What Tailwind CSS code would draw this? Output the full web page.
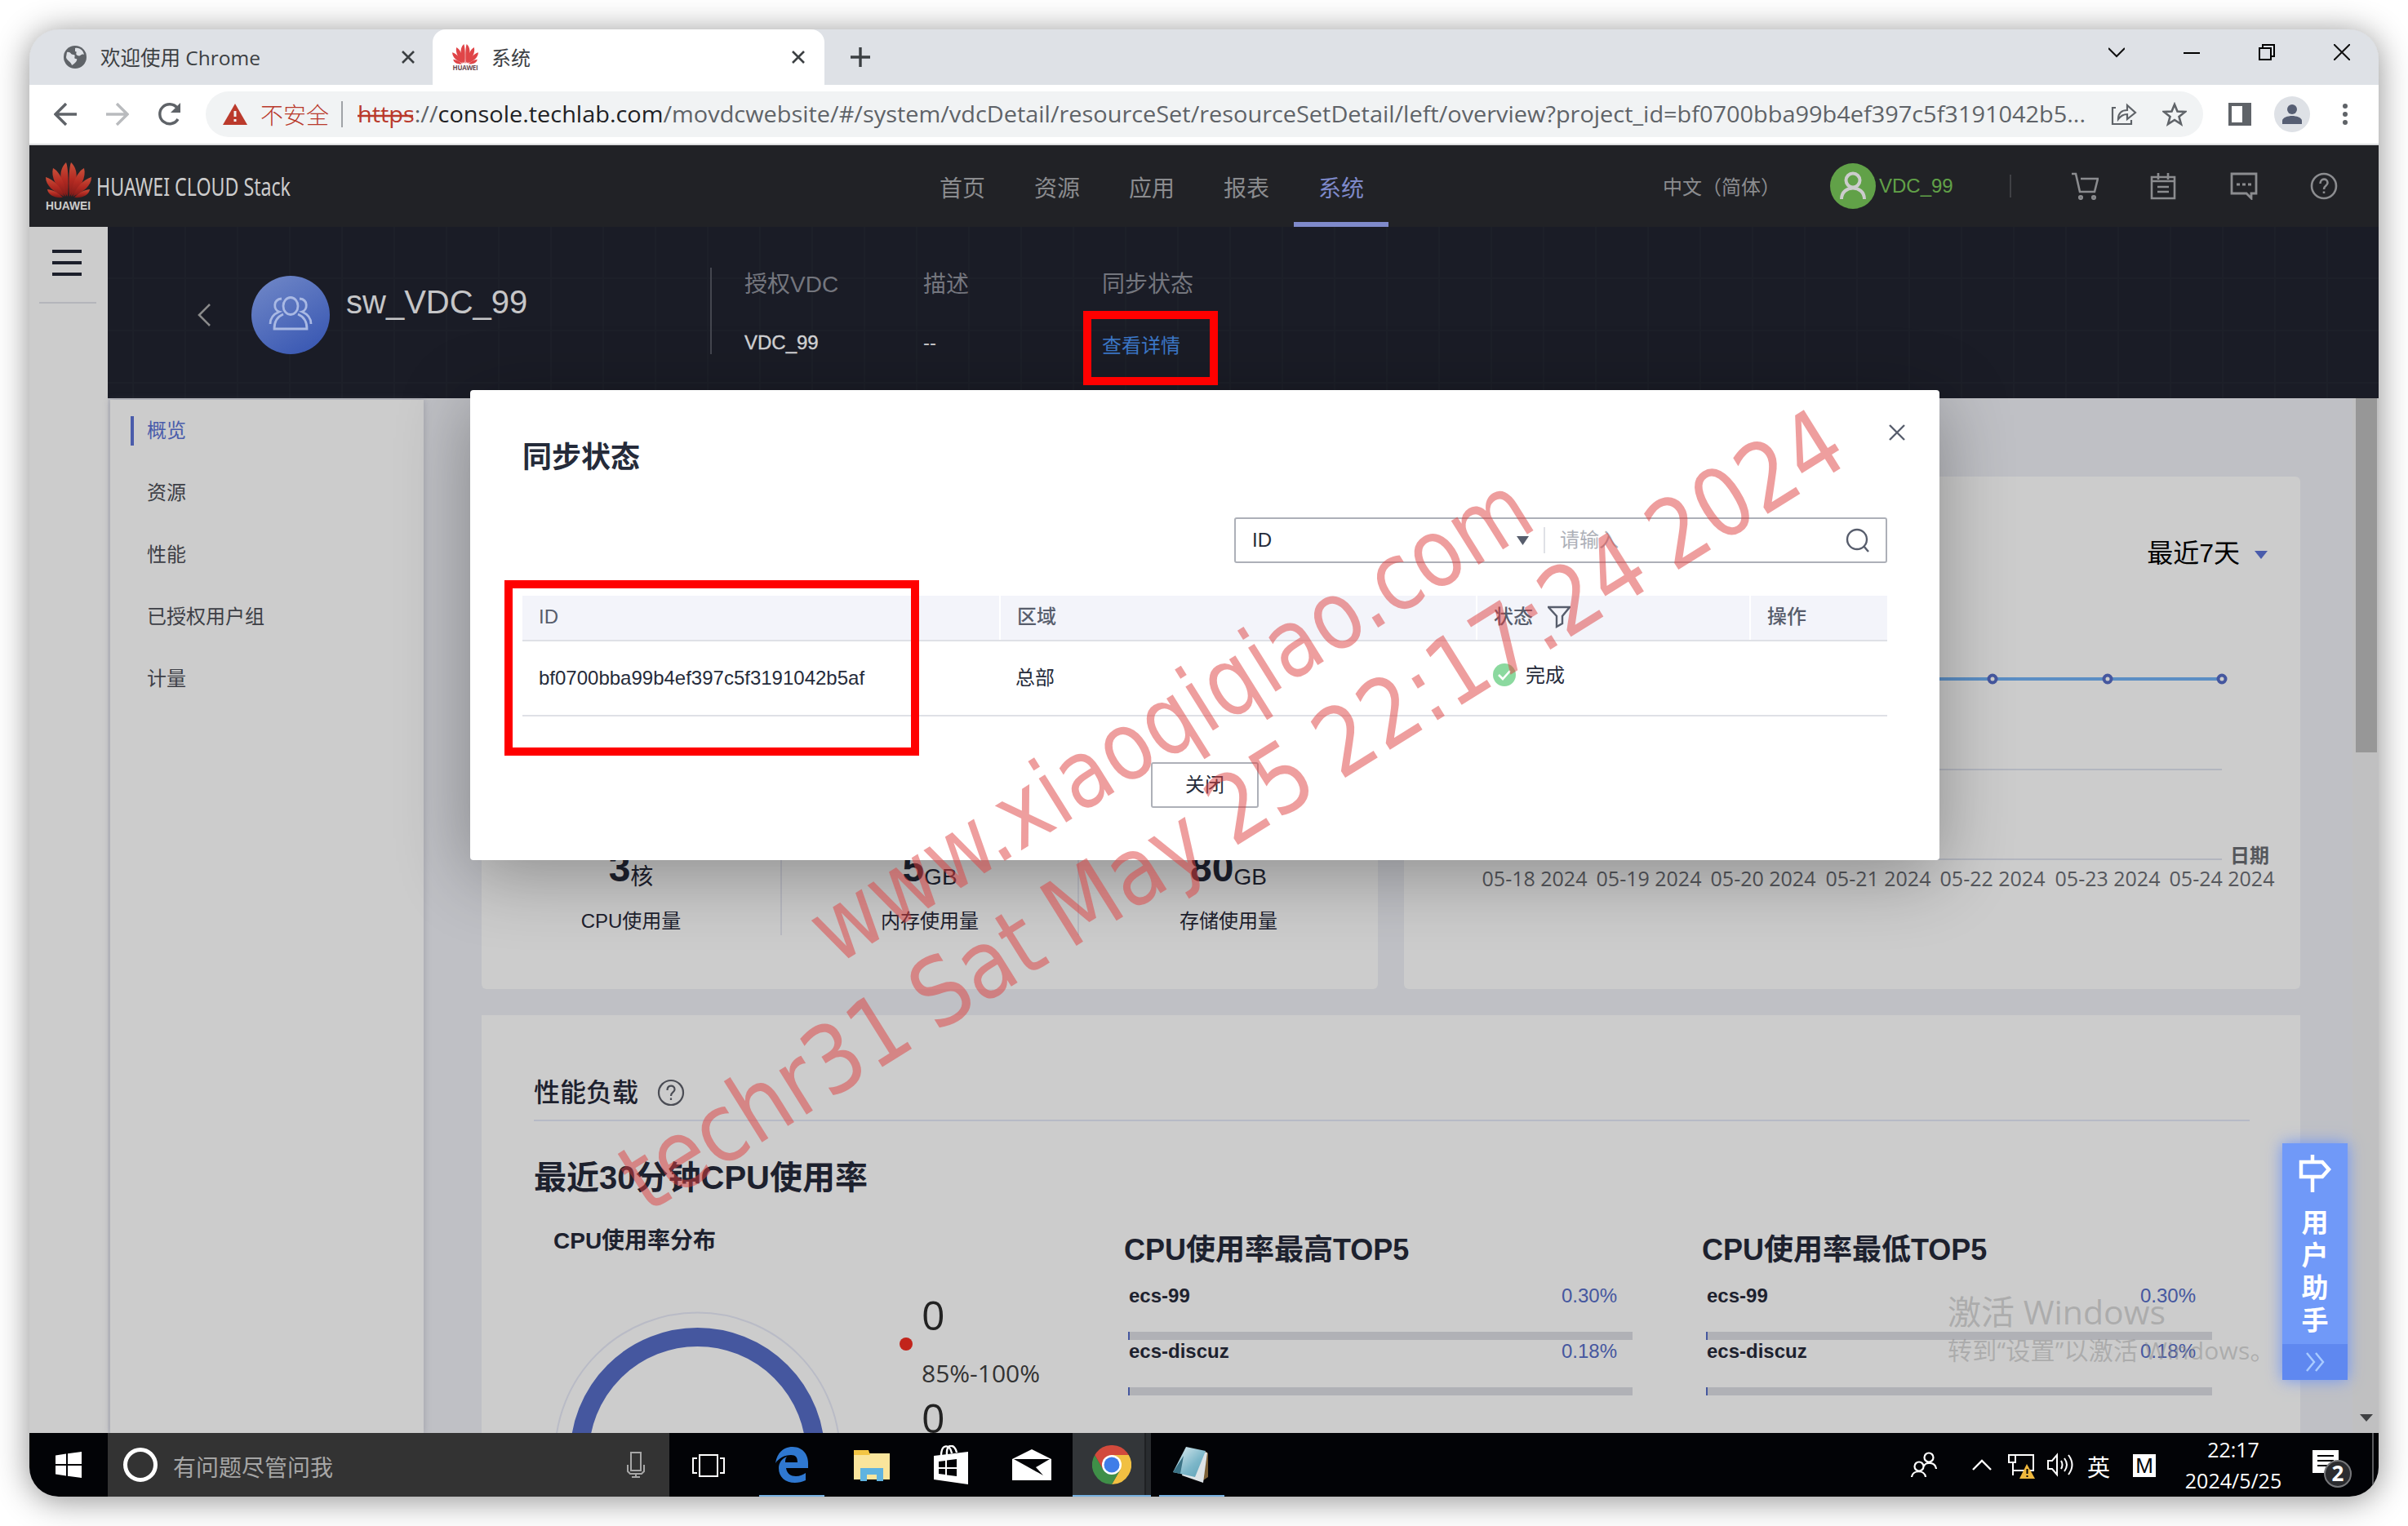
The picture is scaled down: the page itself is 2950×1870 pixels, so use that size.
<!DOCTYPE html>
<html lang="zh-CN">
<head>
<meta charset="utf-8">
<title>系统</title>
<script src="https://cdn.jsdelivr.net/npm/@tailwindcss/browser@4"></script>
</head>
<body class="w-[2950px] h-[1870px] overflow-hidden bg-white font-['Liberation_Sans','Noto_Sans_CJK_SC',sans-serif] text-[24px] leading-[28px]">
<svg class="hidden">
  <symbol id="flower" viewBox="0 0 56 44">
    <path d="M27 42C18 29 14 10 25 0C28 8 28 30 27 42Z"/>
    <path d="M25 42C13 31 6 18 9 7C17 11 24 26 25 42Z"/>
    <path d="M23 42C10 36 0 29 0 18C10 21 19 31 23 42Z"/>
    <path d="M21 43C11 44 3 40 2 33C10 34 17 38 21 43Z"/>
    <path d="M29 42C38 29 42 10 31 0C28 8 28 30 29 42Z"/>
    <path d="M31 42C43 31 50 18 47 7C39 11 32 26 31 42Z"/>
    <path d="M33 42C46 36 56 29 56 18C46 21 37 31 33 42Z"/>
    <path d="M35 43C45 44 53 40 54 33C46 34 39 38 35 43Z"/>
  </symbol>
</svg>

<div class="relative m-[36px] w-[2878px] h-[1798px] rounded-[36px] shadow-[0_4px_40px_rgba(0,0,0,0.45)]">
<div class="relative flex flex-col w-full h-full rounded-[36px] overflow-hidden bg-[#ccc]">

  <!-- tab strip -->
  <div class="flex h-[68px] shrink-0 bg-[#dee1e6] font-['Open_Sans','Noto_Sans_CJK_SC',sans-serif] text-[#3c4043]">
    <div class="flex items-center w-[494px] h-full pl-[42px] pr-[22px]">
      <svg class="w-[28px] h-[28px]" viewBox="0 0 28 28"><circle cx="14" cy="14" r="14" fill="#5f6368"/><path d="M4 8C9 7 8 11 12 11S11 16 15 16S13 23 10 24C9 19 3 18 3 14ZM14 3C20 2 24 6 25 11C21 9 21 14 17 12S18 7 14 7Z" fill="#dee1e6"/></svg>
      <span class="ml-[17px] pt-[2px] grow text-[24.5px]">欢迎使用 Chrome</span>
      <svg class="w-[16px] h-[16px]" viewBox="0 0 16 16"><path d="M1 1L15 15M15 1L1 15" stroke="#3c4043" stroke-width="2.6"/></svg>
    </div>
    <div class="flex items-center w-[480px] h-full pl-[24px] pr-[24px] bg-white rounded-t-[16px]">
      <span class="flex flex-col items-center w-[32px]">
        <svg class="w-[32px] h-[25px]" fill="#e04548"><use href="#flower"/></svg>
        <span class="text-[8px] leading-[8px] font-bold text-[#6b4a50] tracking-[-0.3px]">HUAWEI</span>
      </span>
      <span class="ml-[16px] pt-[2px] grow">系统</span>
      <svg class="w-[16px] h-[16px]" viewBox="0 0 16 16"><path d="M1 1L15 15M15 1L1 15" stroke="#3c4043" stroke-width="2.6"/></svg>
    </div>
    <div class="flex items-center pl-[32px] grow">
      <svg class="w-[24px] h-[24px]" viewBox="0 0 24 24"><path d="M12 0V24M0 12H24" stroke="#3c4043" stroke-width="3.4"/></svg>
    </div>
    <div class="flex items-center gap-[72px] pr-[35px] pb-[12px]">
      <svg class="w-[20px] h-[20px]" viewBox="0 0 20 20"><path d="M0 5L10 15L20 5" fill="none" stroke="#111" stroke-width="2"/></svg>
      <svg class="w-[20px] h-[20px]" viewBox="0 0 20 20"><path d="M0 11H20" stroke="#000" stroke-width="2"/></svg>
      <svg class="w-[20px] h-[20px]" viewBox="0 0 20 20"><path d="M1 5H15V19H1ZM5 5V1H19V15H15" fill="none" stroke="#000" stroke-width="2"/></svg>
      <svg class="w-[20px] h-[20px]" viewBox="0 0 20 20"><path d="M0 0L20 20M20 0L0 20" stroke="#111" stroke-width="2"/></svg>
    </div>
  </div>

  <!-- address bar -->
  <div class="flex items-center h-[74px] shrink-0 bg-white border-b-2 border-[#dcdddf]">
    <svg class="ml-[30px] w-[28px] h-[28px]" viewBox="0 0 28 28"><path d="M28 14H3M15 1L2 14L15 27" fill="none" stroke="#5f6368" stroke-width="3.4"/></svg>
    <svg class="ml-[36px] w-[28px] h-[28px]" viewBox="0 0 28 28"><path d="M0 14H25M13 1L26 14L13 27" fill="none" stroke="#b9bbbe" stroke-width="3.4"/></svg>
    <svg class="ml-[35px] w-[30px] h-[30px]" viewBox="0 0 30 30"><path d="M25 21A12 12 0 1 1 24 7" fill="none" stroke="#5f6368" stroke-width="3.4"/><path d="M28 1V13H16Z" fill="#5f6368"/></svg>
    <div class="flex items-center ml-[29px] w-[2447px] h-[56px] rounded-full bg-[#f1f3f4]">
      <svg class="ml-[21px] w-[30px] h-[26px]" viewBox="0 0 30 26"><path d="M15 0L30 26H0Z" fill="#bb3a2c"/><path d="M13.5 9H16.5V16H13.5ZM13.5 19H16.5V22H13.5Z" fill="#f1f3f4"/></svg>
      <span class="ml-[16px] w-[84px] text-[28px] leading-[36px] text-[#b9392b] whitespace-nowrap font-['Noto_Sans_CJK_SC',sans-serif] font-light">不安全</span>
      <div class="ml-[15px] w-[2px] h-[32px] bg-[#a0a3a7]"></div>
      <svg class="ml-[18px] w-[2120px] h-[56px]" viewBox="0 0 2120 56" font-family="Open Sans" font-size="27.500" fill="#5f6368">
        <text x="0" y="38" textLength="2117" lengthAdjust="spacingAndGlyphs"><tspan fill="#b9392b">https</tspan>://<tspan fill="#202124">console.techlab.com</tspan>/movdcwebsite/#/system/vdcDetail/resourceSet/resourceSetDetail/left/overview?project_id=bf0700bba99b4ef397c5f3191042b5...</text>
        <path d="M0 30H68" stroke="#b9392b" stroke-width="2.5"/>
      </svg>
      <svg class="ml-[28px] w-[32px] h-[28px]" viewBox="0 0 32 28" fill="none" stroke="#5f6368" stroke-width="2.2"><path d="M6 6H2V26H25V21M9 20C9 12 14 9 20 9V3L30 12L20 20V14C15 14 12 16 9 20Z"/></svg>
      <svg class="ml-[31px] w-[30px] h-[30px]" viewBox="0 0 30 30" fill="none" stroke="#5f6368" stroke-width="2.6"><path d="M15 3L18.500 11.500L28 12L20.500 18L23 27L15 22L7 27L9.500 18L2 12L11.500 11.500Z"/></svg>
    </div>
    <svg class="ml-[31px] w-[28px] h-[28px]" viewBox="0 0 28 28"><path d="M0 0H28V28H0ZM4 4V24H17V4Z" fill="#5f6368" fill-rule="evenodd"/></svg>
    <svg class="ml-[28px] w-[44px] h-[44px]" viewBox="0 0 44 44"><circle cx="22" cy="22" r="22" fill="#dee1e6"/><circle cx="22" cy="16" r="6" fill="#565e73"/><path d="M10 34V30C10 26 17 24 22 24S34 26 34 30V34Z" fill="#565e73"/></svg>
    <svg class="ml-[39px] w-[8px] h-[28px]" viewBox="0 0 8 28" fill="#5f6368"><circle cx="4" cy="4" r="3"/><circle cx="4" cy="14" r="3"/><circle cx="4" cy="24" r="3"/></svg>
  </div>

  <!-- console header -->
  <div class="flex items-center h-[100px] shrink-0 bg-[#212226] text-[#8b8c8f]">
    <div class="flex items-center w-[1080px] pl-[20px]">
      <div class="flex flex-col items-center w-[56px] pt-[2px]">
        <svg class="w-[56px] h-[44px]"><defs><linearGradient id="red" x1="0" y1="0" x2="0" y2="1"><stop offset="0" stop-color="#c9503a"/><stop offset=".5" stop-color="#b32a22"/><stop offset="1" stop-color="#7d1a18"/></linearGradient></defs><use href="#flower" fill="url(#red)"/></svg>
        <svg class="mt-[1px] w-[58px] h-[16px]"><text x="1" y="13" font-size="15" font-weight="bold" fill="#ccc" textLength="55" lengthAdjust="spacingAndGlyphs" font-family="Liberation Sans">HUAWEI</text></svg>
      </div>
      <svg class="ml-[5px] w-[246px] h-[50px]"><text x="1" y="37" font-size="31" fill="#ccc" textLength="238" lengthAdjust="spacingAndGlyphs" font-family="Noto Sans">HUAWEI CLOUD Stack</text></svg>
    </div>
    <nav class="flex h-full w-[921px] pl-[5px] text-[28px]">
      <span class="flex items-center justify-center w-[116px] pt-[7px]">首页</span>
      <span class="flex items-center justify-center w-[116px] pt-[7px]">资源</span>
      <span class="flex items-center justify-center w-[116px] pt-[7px]">应用</span>
      <span class="flex items-center justify-center w-[116px] pt-[7px]">报表</span>
      <span class="flex items-center justify-center w-[116px] pt-[13px] border-b-[6px] border-[#7f8acb] text-[#7f8acb]">系统</span>
    </nav>
    <span class="w-[193px] whitespace-nowrap pt-[4px]">中文（简体）</span>
    <svg class="ml-[12px] w-[56px] h-[56px]" viewBox="0 0 56 56"><circle cx="28" cy="28" r="28" fill="#61a148"/><g fill="none" stroke="#ccc" stroke-width="4"><circle cx="28" cy="21" r="8.500"/><path d="M14 44C14 26 42 26 42 44"/></g></svg>
    <span class="ml-[4px] w-[160px] text-[#61a148]">VDC_99</span>
    <div class="w-[2px] h-[28px] bg-[#404145]"></div>
    <svg class="ml-[73px] w-[34px] h-[34px]" viewBox="0 0 34 34" fill="none" stroke="#8b8c8f" stroke-width="2.6"><path d="M1 2H6L11 24H29L33 8H12"/><circle cx="12" cy="31" r="1.800"/><circle cx="28" cy="31" r="1.800"/></svg>
    <svg class="ml-[62px] w-[34px] h-[34px]" viewBox="0 0 34 34" fill="none" stroke="#8b8c8f" stroke-width="2.6"><path d="M3 6H31V32H3ZM11 1V9M23 1V9M3 11H31M10 18H24M10 24H24"/></svg>
    <svg class="ml-[65px] w-[34px] h-[34px]" viewBox="0 0 34 34" fill="none" stroke="#8b8c8f" stroke-width="2.8"><path d="M2 2H32V26H26V32L20 26H2Z"/><path d="M8 15H12M15 15H19M22 15H26"/></svg>
    <svg class="ml-[64px] w-[34px] h-[34px]" viewBox="0 0 34 34" fill="none" stroke="#8b8c8f" stroke-width="2.6"><circle cx="17" cy="17" r="15"/><path d="M12.500 14C12.500 7 21.500 7 21.500 13C21.500 17 17 16 17 21M17 23.500V26"/></svg>
  </div>

  <!-- page -->
  <div class="flex h-[1478px] shrink-0">
    <aside class="w-[96px] bg-[#ccc] flex flex-col">
      <div class="flex flex-col gap-[10px] ml-[28px] mt-[28px] w-[36px]">
        <div class="h-[4px] bg-[#1c1f2b]"></div><div class="h-[4px] bg-[#1c1f2b]"></div><div class="h-[4px] bg-[#1c1f2b]"></div>
      </div>
      <div class="ml-[12px] mt-[32px] w-[70px] h-[2px] bg-[#b4b5bb]"></div>
      <div class="grow"></div>
    </aside>
    <div class="w-[2782px] flex flex-col">
      <!-- resource set banner -->
      <section class="flex h-[210px] shrink-0 bg-[#1a1c26] bg-[linear-gradient(#1d2029_2px,transparent_2px),linear-gradient(90deg,#1d2029_2px,transparent_2px)] bg-[size:64px_64px] bg-[position:30px_-2px] text-[28px] text-[#74767e]">
        <svg class="ml-[109px] mt-[94px] w-[18px] h-[28px]" viewBox="0 0 18 28"><path d="M16 1L3 14L16 27" fill="none" stroke="#8b8b8b" stroke-width="2.6"/></svg>
        <svg class="ml-[49px] mt-[60px] w-[96px] h-[96px]" viewBox="0 0 96 96">
          <defs><linearGradient id="av" x1="0" y1="0" x2=".6" y2="1"><stop offset="0" stop-color="#7289c8"/><stop offset="1" stop-color="#3d5bb4"/></linearGradient></defs>
          <circle cx="48" cy="48" r="48" fill="url(#av)"/>
          <g fill="none" stroke="#a9b9e4" stroke-width="2.800"><ellipse cx="48" cy="37" rx="9" ry="10.500"/><path d="M39 47C32 50 28 56 28 65H68C68 56 64 50 57 47M37 28C26 29 27 42 34 44C27 47 23 51 23 59M59 28C70 29 69 42 62 44C69 47 73 51 73 59"/></g>
        </svg>
        <span class="ml-[20px] mt-[68px] w-[446px] text-[40px] leading-[48px] text-[#c6c6c8]">sw_VDC_99</span>
        <div class="mt-[50px] w-[2px] h-[106px] bg-[#44464f]"></div>
        <div class="ml-[40px] mt-[53px] w-[219px]"><div class="h-[36px] leading-[36px]">授权VDC</div><div class="mt-[35px] h-[36px] leading-[36px] text-[24px] text-[#d2d2d4] [-webkit-text-stroke:0.4px]">VDC_99</div></div>
        <div class="mt-[53px] w-[219px]"><div class="h-[36px] leading-[36px]">描述</div><div class="mt-[35px] h-[36px] leading-[36px] text-[24px] text-[#c8c8ca]">--</div></div>
        <div class="mt-[53px]"><div class="h-[36px] leading-[36px]">同步状态</div><div class="mt-[39px] h-[36px] leading-[36px] text-[24px] text-[#3c78c8]">查看详情</div></div>
      </section>

      <div class="flex grow bg-[#bfc0c5]">
        <aside class="ml-[3px] mt-[2px] w-[384px] bg-[#ccc] shadow-[0_0_8px_rgba(90,90,110,0.35)] text-[#3d3f46]">
          <div class="flex items-center h-[36px] mt-[20px] ml-[25px] pl-[16px] border-l-4 border-[#4a5cab] text-[#4a5cab]">概览</div>
          <div class="flex items-center h-[36px] mt-[40px] pl-[45px]">资源</div>
          <div class="flex items-center h-[36px] mt-[40px] pl-[45px]">性能</div>
          <div class="flex items-center h-[36px] mt-[40px] pl-[45px]">已授权用户组</div>
          <div class="flex items-center h-[36px] mt-[40px] pl-[45px]">计量</div>
        </aside>

        <main class="w-[2363px] pl-[71px] pt-[96px] text-[#1d212e]">
          <div class="flex gap-[32px]">
            <section class="flex items-end w-[1098px] h-[628px] rounded-[6px] bg-[#ccc] pb-[66px]">
              <div class="w-[368px] h-[110px] border-r-2 border-[#b9bac2] flex flex-col items-center">
                <div class="h-[56px] flex items-baseline leading-[56px]"><b class="text-[48px] leading-[56px]">3</b><span class="text-[28px] leading-[28px] translate-y-1">核</span></div>
                <div class="mt-[23px] leading-[28px]">CPU使用量</div>
              </div>
              <div class="w-[364px] h-[110px] border-r-2 border-[#b9bac2] flex flex-col items-center">
                <div class="h-[56px] flex items-baseline leading-[56px]"><b class="text-[48px] leading-[56px]">5</b><span class="text-[28px] leading-[28px] translate-y-1">GB</span></div>
                <div class="mt-[23px] leading-[28px]">内存使用量</div>
              </div>
              <div class="w-[366px] h-[110px] flex flex-col items-center">
                <div class="h-[56px] flex items-baseline leading-[56px]"><b class="text-[48px] leading-[56px]">80</b><span class="text-[28px] leading-[28px] translate-y-1">GB</span></div>
                <div class="mt-[23px] leading-[28px]">存储使用量</div>
              </div>
            </section>
            <section class="w-[1098px] h-[628px] rounded-[6px] bg-[#ccc]">
              <div class="flex items-center justify-end h-[188px] pr-[40px] text-[32px] leading-[40px] text-black">最近7天
                <svg class="ml-[18px] mt-[4px] w-[16px] h-[10px]" viewBox="0 0 16 10"><path d="M0 0H16L8 10Z" fill="#4a5cab"/></svg></div>
              <svg class="w-[1098px] h-[440px]" viewBox="0 0 1098 440">
                <path d="M150 171H1002M150 281H1002" stroke="#b3b6bf" stroke-width="2"/>
                <path d="M159 60H1002" stroke="#5b8ec4" stroke-width="4"/>
                <g fill="#ccc" stroke="#45579f" stroke-width="4"><circle cx="159" cy="60" r="4.500"/><circle cx="300" cy="60" r="4.500"/><circle cx="440" cy="60" r="4.500"/><circle cx="581" cy="60" r="4.500"/><circle cx="721" cy="60" r="4.500"/><circle cx="862" cy="60" r="4.500"/><circle cx="1002" cy="60" r="4.500"/></g>
                <text x="1012" y="285" font-size="24" font-weight="700" fill="#55575c" font-family="Noto Sans CJK SC">日期</text>
                <g font-size="25" fill="#55575c" font-family="Open Sans" text-anchor="middle">
                  <text x="160" y="314">05-18 2024</text><text x="300" y="314">05-19 2024</text><text x="440" y="314">05-20 2024</text><text x="581" y="314">05-21 2024</text><text x="721" y="314">05-22 2024</text><text x="862" y="314">05-23 2024</text><text x="1002" y="314">05-24 2024</text>
                </g>
              </svg>
            </section>
          </div>

          <section class="mt-[32px] w-[2228px] h-[512px] bg-[#ccc] overflow-hidden">
            <div class="flex items-end h-[130px] ml-[64px] w-[2102px] pb-[9px] border-b-2 border-[#b6bac6]">
              <span class="text-[32px] leading-[48px] font-medium">性能负载</span>
              <svg class="ml-[23px] mb-[7px] w-[34px] h-[34px]" viewBox="0 0 34 34" fill="none" stroke="#4b4d55" stroke-width="2.200"><circle cx="17" cy="17" r="15"/><path d="M12.500 14C12.500 7 21.500 7 21.500 13C21.500 17 17 16 17 21M17 23.500V26"/></svg>
            </div>
            <div class="flex items-center h-[124px] pt-[14px] ml-[64px] text-[40px] leading-[48px] font-bold">最近30分钟CPU使用率</div>
            <div class="flex ml-[88px]">
              <div class="w-[424px]">
                <div class="h-[44px] pt-[1px] leading-[44px] text-[28px] font-bold">CPU使用率分布</div>
                <svg class="w-[370px] h-[214px]" viewBox="0 0 370 214" fill="none"><circle cx="176.500" cy="241" r="174.500" stroke="#b9bbc6" stroke-width="2"/><circle cx="176.500" cy="241" r="144.500" stroke="#45579f" stroke-width="23"/></svg>
              </div>
              <div class="flex w-[276px] pt-[80px] font-['Open_Sans',sans-serif] text-[#222]">
                <div class="mt-[61px] w-[16px] h-[16px] rounded-full bg-[#c2241b]"></div>
                <div class="ml-[11px]">
                  <div class="h-[68px] text-[50px] leading-[67px]">0</div>
                  <div class="h-[58px] text-[30px] leading-[73px] text-[#333]">85%-100%</div>
                  <div class="h-[54px] text-[50px] leading-[66px]">0</div>
                </div>
              </div>
              <div class="w-[709px] pr-[87px]">
                <div class="h-[66px] mb-[10px] text-[36px] leading-[67px] font-bold -ml-[1px]">CPU使用率最高TOP5</div>
                <div class="ml-[5px] pr-[19px] flex justify-between"><b>ecs-99</b><span class="text-[#45579f]">0.30%</span></div>
                <div class="ml-[4px] mt-[30px] h-[10px] bg-[#b0b1b6] border-l-2 border-[#45579f]"></div>
                <div class="ml-[5px] pr-[19px] flex justify-between"><b>ecs-discuz</b><span class="text-[#45579f]">0.18%</span></div>
                <div class="ml-[4px] mt-[30px] h-[10px] bg-[#b0b1b6] border-l-2 border-[#45579f]"></div>
              </div>
              <div class="w-[623px]">
                <div class="h-[66px] mb-[10px] text-[36px] leading-[67px] font-bold -ml-[2px]">CPU使用率最低TOP5</div>
                <div class="ml-[4px] pr-[20px] flex justify-between"><b>ecs-99</b><span class="text-[#45579f]">0.30%</span></div>
                <div class="ml-[3px] mt-[30px] h-[10px] bg-[#b0b1b6] border-l-2 border-[#45579f]"></div>
                <div class="ml-[4px] pr-[20px] flex justify-between"><b>ecs-discuz</b><span class="text-[#45579f]">0.18%</span></div>
                <div class="ml-[3px] mt-[30px] h-[10px] bg-[#b0b1b6] border-l-2 border-[#45579f]"></div>
              </div>
            </div>
          </section>
        </main>

        <div class="flex flex-col w-[32px] bg-[#c0c0c1]">
          <div class="ml-[4px] w-[26px] h-[434px] bg-[#979797]"></div>
          <div class="grow"></div>
          <svg class="ml-[9px] mb-[14px] w-[16px] h-[9px]" viewBox="0 0 16 9"><path d="M0 0H16L8 9Z" fill="#3f4043"/></svg>
        </div>
      </div>
    </div>
  </div>

  <!-- taskbar -->
  <div class="flex items-center h-[78px] shrink-0 bg-[#020306] text-white">
    <div class="flex items-center justify-center w-[96px]"><svg class="w-[32px] h-[32px]" viewBox="0 0 32 32" fill="#fff"><path d="M0 4.500L13 2.500V15H0ZM15 2.200L32 0V15H15ZM0 17H13V29.500L0 27.500ZM15 17H32V32L15 29.800Z"/></svg></div>
    <div class="flex items-center w-[688px] h-full bg-[#333] text-[#a6a6a6] text-[28px]">
      <svg class="ml-[18px] w-[44px] h-[44px]" viewBox="0 0 44 44"><circle cx="22" cy="22" r="18.500" fill="none" stroke="#fff" stroke-width="5"/></svg>
      <span class="ml-[18px] w-[556px] leading-[36px] pt-[9px]">有问题尽管问我</span>
      <svg class="w-[22px] h-[32px]" viewBox="0 0 22 32" fill="none" stroke="#a6a6a6" stroke-width="2"><path d="M5 1H17V23H5ZM1 16V24L4 27H18L21 24V16M11 27V31M6 31H16"/></svg>
    </div>
    <div class="flex items-center w-[110px] pl-[28px]"><svg class="mt-[2px] w-[40px] h-[28px]" viewBox="0 0 40 28" fill="none" stroke="#fff" stroke-width="2"><path d="M9 1H31V27H9ZM6 5H1V23H6M34 5H39V23H34"/></svg></div>
    <div class="flex items-center justify-center w-[80px] h-full pt-[2px] border-b-2 border-[#76b0e0]">
      <svg class="w-[42px] h-[44px]" viewBox="0 0 42 44"><path d="M1 20C3 7 11 0 22 0C34 0 41 9 41 20V26H14C15 33 20 36 26 36C31 36 35 34 38 32V41C34 43 29 44 25 44C13 44 5 37 5 26C5 20 9 14 15 12C13 14 13 17 13 19H28C28 13 26 10 20 10C12 10 5 14 1 20Z" fill="#2f78d0"/></svg>
    </div>
    <div class="flex items-center justify-center w-[116px]">
      <svg class="mt-[2px] w-[44px] h-[38px]" viewBox="0 0 44 38"><path d="M0 1H18V4H44V36H0Z" fill="#fae59c"/><path d="M0 0H18L20 6H0Z" fill="#f3c544"/><path d="M8 38V22H36V38H28V30H16V38Z" fill="#5fb3e0"/></svg>
    </div>
    <div class="flex items-center justify-center w-[78px]">
      <svg class="w-[42px] h-[48px]" viewBox="0 0 42 48"><path d="M0 13L42 8V48L0 42Z" fill="#fff"/><path d="M9 13C9 -2 20 -2 22 10M16 12C15 -3 26 -2 28 9" fill="none" stroke="#fff" stroke-width="2.400"/><path d="M6 20L14 19V27H6ZM16 18.500L28 17V27H16ZM6 29H14V36L6 35ZM16 29H28V38L16 36.500Z" fill="#020306"/></svg>
    </div>
    <div class="flex items-center w-[110px] pl-[36px]">
      <svg class="w-[48px] h-[38px]" viewBox="0 0 48 38"><path d="M0 12L24 0L48 12V38H0Z" fill="#fff"/><path d="M2 12H46L29 22L38 32L20 22Z" fill="#020306"/></svg>
    </div>
    <div class="flex items-center w-[96px] h-full pt-[2px] pl-[24px] border-b-2 border-[#76b0e0] bg-[linear-gradient(90deg,#333639_88px,#1f2123_88px,#1f2123_90px,#292c2f_90px)]">
      <svg class="w-[48px] h-[48px]" viewBox="0 0 48 48"><path d="M24 12H44.800A24 24 0 0 1 24 48L34.400 30Z" fill="#f1c042"/><path d="M3.200 12A24 24 0 0 0 24 48L34.400 30L24 24L13.600 30Z" fill="#3f8f48"/><path d="M3.200 12A24 24 0 0 1 44.800 12H24L13.600 30Z" fill="#d24a3c"/><circle cx="24" cy="24" r="12" fill="#fff"/><circle cx="24" cy="24" r="9.500" fill="#3f7de8"/></svg>
    </div>
    <div class="flex items-center justify-center ml-[10px] w-[80px] h-full border-b-2 border-[#76b0e0]">
      <svg class="w-[46px] h-[46px] mt-[2px] -ml-[3px]" viewBox="0 0 46 46"><defs><linearGradient id="np" x1="0" y1="0" x2="1" y2="1"><stop offset="0" stop-color="#e6f1f4"/><stop offset=".6" stop-color="#7db7c9"/><stop offset="1" stop-color="#5b9fb5"/></linearGradient></defs><path d="M40 6L44 9V38L38 42Z" fill="#7a5f35"/><path d="M20 4L43 8L38 45L12 36Z" fill="#dde3e6"/><path d="M17 1L41 6L28 38L1 32Z" fill="url(#np)"/><path d="M1 32L14 12L10 34Z" fill="#3b7386"/></svg>
    </div>
    <div class="flex items-center grow justify-end h-full">
      <svg class="w-[32px] h-[32px]" viewBox="0 0 32 32" fill="none" stroke="#fff" stroke-width="2.200"><circle cx="22" cy="7" r="5.500"/><path d="M16 18C17 12 30 12 31 21"/><circle cx="10" cy="18" r="5.500"/><path d="M1 31C2 22 17 22 18 31"/></svg>
      <svg class="ml-[43px] w-[24px] h-[14px]" viewBox="0 0 24 14"><path d="M1 13L12 2L23 13" fill="none" stroke="#fff" stroke-width="2.400"/></svg>
      <svg class="ml-[20px] mt-[4px] w-[34px] h-[30px]" viewBox="0 0 34 30" fill="none" stroke="#fff" stroke-width="2"><path d="M1 1H9V10H1ZM9 1H31V20H6V10M6 26V20"/><path d="M23 12L33 30H14Z" fill="#f0b83c" stroke="none"/><path d="M23.500 18V24M23.500 26V28" stroke="#020306"/></svg>
      <svg class="ml-[14px] w-[34px] h-[30px]" viewBox="0 0 34 30" fill="none" stroke="#fff" stroke-width="2"><path d="M1 10H6L12 3V27L6 20H1ZM17 10Q20 15 17 20M21 7Q27 15 21 23M26 3Q35 15 26 27"/></svg>
      <span class="ml-[15px] pt-[3px] text-[28px] leading-[36px] font-['Noto_Sans_CJK_SC',sans-serif] w-[28px]">英</span>
      <span class="ml-[28px] mt-[2px] w-[28px] h-[28px] bg-white text-[#020306] text-[26px] leading-[28px] text-center">M</span>
      <div class="ml-[30px] w-[130px] text-center text-[25px] leading-[38px] font-['Open_Sans',sans-serif]">22:17<br>2024/5/25</div>
      <svg class="ml-[32px] w-[52px] h-[52px] mt-[4px]" viewBox="0 0 52 52"><path d="M0 6H32V34H22L16 40V34H0Z" fill="#fff"/><path d="M6 13H26M6 19H26M6 25H20" stroke="#020306" stroke-width="2.200"/><circle cx="31" cy="35" r="16" fill="#2b2c2f" stroke="#77787b" stroke-width="2"/><text x="31" y="44" font-size="26" font-weight="bold" fill="#fff" text-anchor="middle" font-family="Open Sans">2</text></svg>
      <div class="ml-[21px] mr-[6px] w-[2px] h-full bg-[#5a5b5e]"></div>
    </div>
  </div>

  <!-- Windows activation notice -->
  <div class="absolute left-[2350px] top-[1545px] text-[#8c8c8c]/50 font-['Open_Sans','Noto_Sans_CJK_SC',sans-serif] whitespace-nowrap">
    <div class="text-[41px] leading-[52px]">激活 Windows</div>
    <div class="text-[30px] leading-[44px] tracking-[0.25px]">转到“设置”以激活 Windows。</div>
  </div>

  <!-- user assistant -->
  <div class="absolute left-[2760px] top-[1365px] w-[80px] h-[290px] flex flex-col items-center bg-[#7099f8] shadow-[0_0_18px_#6f95f5] text-white text-[33px] leading-[40px] font-bold">
    <svg class="mt-[14px] w-[40px] h-[46px]" viewBox="0 0 40 46" fill="none" stroke="#fff" stroke-width="4.500"><path d="M17 0V9M17 27V46M3 9H29L37 18L29 27H3Z"/></svg>
    <div class="mt-[18px] w-[33px] h-[168px]">用户助手</div>
    <div class="flex items-center justify-center w-full h-[44px] bg-[#5f88f0]"><svg class="w-[24px] h-[24px]" viewBox="0 0 24 24" fill="none" stroke="#a9cbff" stroke-width="2.400"><path d="M2 1L11 12L2 23M13 1L22 12L13 23"/></svg></div>
  </div>

  <!-- sync status dialog -->
  <div class="absolute left-[540px] top-[442px] w-[1800px] h-[576px] bg-white rounded-[4px] shadow-[0_16px_90px_rgba(0,0,0,0.32)] px-[64px] text-[#252b3a]">
    <div class="flex h-[156px] justify-between pt-[42px]">
      <h2 class="text-[36px] leading-[82px] font-bold">同步状态</h2>
      <svg class="-mr-[22px] w-[20px] h-[20px]" viewBox="0 0 20 20"><path d="M1 1L19 19M19 1L1 19" stroke="#575d6c" stroke-width="2.400"/></svg>
    </div>
    <div class="flex items-center ml-[872px] w-[800px] h-[56px] border-2 border-[#adb0b8] rounded-[3px] pl-[20px] pr-[19px]">
      <span class="w-[324px]">ID</span>
      <svg class="w-[15px] h-[11px]" viewBox="0 0 15 11"><path d="M0 0H15L7.500 11Z" fill="#575d6c"/></svg>
      <div class="ml-[18px] w-[2px] h-[32px] bg-[#dfe1e6]"></div>
      <span class="ml-[18px] grow text-[#adb0b8]">请输入</span>
      <svg class="w-[30px] h-[30px]" viewBox="0 0 30 30" fill="none" stroke="#575d6c" stroke-width="2.400"><circle cx="14" cy="14" r="12"/><path d="M22 22L28 29"/></svg>
    </div>
    <div class="mt-[40px] grid grid-cols-[584px_584px_335px_169px] items-center h-[56px] bg-[#f3f4fa] border-b-2 border-[#dfe1e6] text-[#575d6c] [&>*]:h-full [&>*]:flex [&>*]:items-center [&>*]:pl-[20px] font-medium">
      <div class="pb-[2px]">ID</div><div class="border-l-2 border-white pb-[2px]">区域</div>
      <div class="border-l-2 border-white pb-[2px]">状态<svg class="ml-[18px] w-[28px] h-[28px]" viewBox="0 0 28 28" fill="none" stroke="#575d6c" stroke-width="2.400"><path d="M1 2H27L18 13V22L11 26V13Z"/></svg></div>
      <div class="border-l-2 border-white pb-[2px]">操作</div>
    </div>
    <div class="grid grid-cols-[584px_584px_335px_169px] items-center h-[92px] border-b-2 border-[#dfe1e6] [&>*]:pl-[20px] [&>*]:flex [&>*]:items-center">
      <div>bf0700bba99b4ef397c5f3191042b5af</div><div>总部</div>
      <div class="pb-[6px]"><svg class="ml-[1px] w-[28px] h-[28px] -mt-[3px]" viewBox="0 0 28 28"><circle cx="14" cy="14" r="14" fill="#8bd99f"/><path d="M7 14L12 19L21 9" fill="none" stroke="#fff" stroke-width="2.600"/></svg><span class="ml-[12px]">完成</span></div>
    </div>
    <div class="mx-auto mt-[56px] flex items-center justify-center w-[132px] h-[56px] border-2 border-[#adb0b8] rounded-[3px]">关闭</div>
  </div>

  <!-- highlights -->
  <div class="absolute left-[1291px] top-[345px] w-[165px] h-[91px] border-[10px] border-[#f00]"></div>
  <div class="absolute left-[582px] top-[675px] w-[508px] h-[215px] border-[10px] border-[#f00]"></div>

  <!-- diagonal stamp -->
  <svg class="absolute left-[-36px] top-[-36px] w-[2950px] h-[1870px]" viewBox="0 0 2950 1870" fill="#de3e3e" fill-opacity=".5" font-family="'DejaVu Sans Condensed','DejaVu Sans'" font-size="116">
    <text transform="translate(1024 1184) rotate(-32)" textLength="1016" lengthAdjust="spacingAndGlyphs">www.xiaoqiqiao.com</text>
    <text transform="translate(792 1488) rotate(-32)" textLength="1741" lengthAdjust="spacingAndGlyphs" word-spacing="-6">techr31 Sat May 25 22:17:24 2024</text>
  </svg>
</div>
</div>
</body>
</html>
